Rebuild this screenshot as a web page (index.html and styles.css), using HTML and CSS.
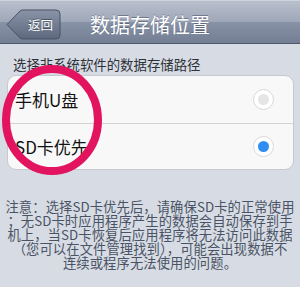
FILE: index.html
```html
<!DOCTYPE html>
<html lang="zh-CN">
<head>
<meta charset="utf-8">
<link rel="stylesheet" href="styles.css">
</head>
<body>
<div class="page">
  <header class="navbar">
    <div class="nav-left">
      <button class="back">
        <svg class="back-shape" width="55" height="31" viewBox="0 0 55 31">
          <defs>
            <linearGradient id="bg" x1="0" y1="0" x2="0" y2="1">
              <stop offset="0" stop-color="#8a94a8"/>
              <stop offset="1" stop-color="#5d687e"/>
            </linearGradient>
          </defs>
          <path d="M1 15.5 L14 2 Q15 1 17 1 L50 1 Q54 1 54 5 L54 26 Q54 30 50 30 L17 30 Q15 30 14 29 Z" fill="url(#bg)" stroke="#4a5367" stroke-width="1"/>
        </svg>
        <span class="back-label">返回</span>
      </button>
    </div>
    <h1 class="title">数据存储位置</h1>
    <div class="nav-right"></div>
  </header>

  <main class="content">
    <p class="section-title">选择非系统软件的数据存储路径</p>
    <ul class="card">
      <li class="row">
        <span class="row-label">手机U盘</span>
        <span class="radio"><span class="dot"></span></span>
      </li>
      <li class="row">
        <span class="row-label">SD卡优先</span>
        <span class="radio"><span class="dot on"></span></span>
      </li>
    </ul>
    <div class="note">
      <p class="note-line">注意：选择SD卡优先后，请确保SD卡的正常使用</p>
      <p class="note-line">；无SD卡时应用程序产生的数据会自动保存到手</p>
      <p class="note-line">机上，当SD卡恢复后应用程序将无法访问此数据</p>
      <p class="note-line">（您可以在文件管理找到），可能会出现数据不</p>
      <p class="note-line">连续或程序无法使用的问题。</p>
    </div>
  </main>

  <svg class="ring" width="110" height="120" viewBox="0 0 110 120">
    <ellipse cx="52" cy="56" rx="46" ry="51" fill="none" stroke="#e2145f" stroke-width="8"/>
  </svg>
</div>
</body>
</html>
```

FILE: styles.css
```css
* { box-sizing: border-box; }
html, body {
  margin: 0;
  padding: 0;
}
body {
  width: 300px;
  height: 287px;
  overflow: hidden;
  background: #d7dce4;
  font-family: "Noto Sans CJK SC", "Noto Sans", sans-serif;
}
.page {
  position: relative;
  width: 300px;
  height: 287px;
}
.navbar {
  height: 44px;
  padding-top: 4px;
  display: grid;
  grid-template-columns: 1fr auto 1fr;
  align-items: center;
  background: linear-gradient(#b9c0cd 0%, #9ea7b8 50%, #8892a6 51%, #737e94 100%);
  border-top: 1px solid #cfd4dd;
  border-bottom: 1px solid #4f586a;
}
.nav-left {
  display: flex;
  padding-left: 6px;
}
.back {
  position: relative;
  width: 55px;
  height: 31px;
  padding: 0 0 0 14px;
  border: 0;
  background: none;
  display: flex;
  align-items: center;
  justify-content: center;
}
.back-shape {
  position: absolute;
  left: 0;
  top: 0;
}
.back-label {
  position: relative;
  color: #fff;
  font-size: 12.5px;
  font-family: "Noto Sans CJK SC", sans-serif;
  text-shadow: 0 -1px 0 rgba(0,0,0,0.4);
}
.title {
  margin: 0;
  padding-top: 2px;
  font-size: 20px;
  font-weight: 400;
  color: #fff;
  text-shadow: 0 -1px 0 rgba(60,70,90,0.5);
  line-height: 1;
}
.content {
  padding: 0 6px;
}
.section-title {
  margin: 10px 0 0 7px;
  font-size: 13.4px;
  line-height: 20px;
  color: #2e3138;
}
.card {
  list-style: none;
  margin: 1px 0 0 1px;
  padding: 0;
  width: 287px;
  background: #f8f8f8;
  border: 1px solid #c5c9d0;
  border-radius: 9px;
}
.row {
  height: 46.5px;
  display: flex;
  align-items: center;
  justify-content: space-between;
  padding: 0 19px 0 7px;
}
.row + .row {
  border-top: 1px solid #d3d3d3;
}
.row-label {
  font-size: 17px;
  color: #111;
}
.radio {
  width: 21px;
  height: 21px;
  border-radius: 50%;
  border: 1px solid #d8d8d8;
  background: #fff;
  display: flex;
  align-items: center;
  justify-content: center;
}
.dot {
  width: 11px;
  height: 11px;
  border-radius: 50%;
  background: #e5e5e5;
}
.dot.on {
  background: #2f8ef2;
}
.note {
  margin-top: 30px;
  display: flex;
  flex-direction: column;
  align-items: center;
}
.note-line {
  margin: 0;
  height: 14px;
  font-size: 13.3px;
  line-height: 14px;
  color: #4a5365;
  white-space: nowrap;
  letter-spacing: 0.1px;
}
.ring {
  position: absolute;
  left: 0;
  top: 64px;
}
```
